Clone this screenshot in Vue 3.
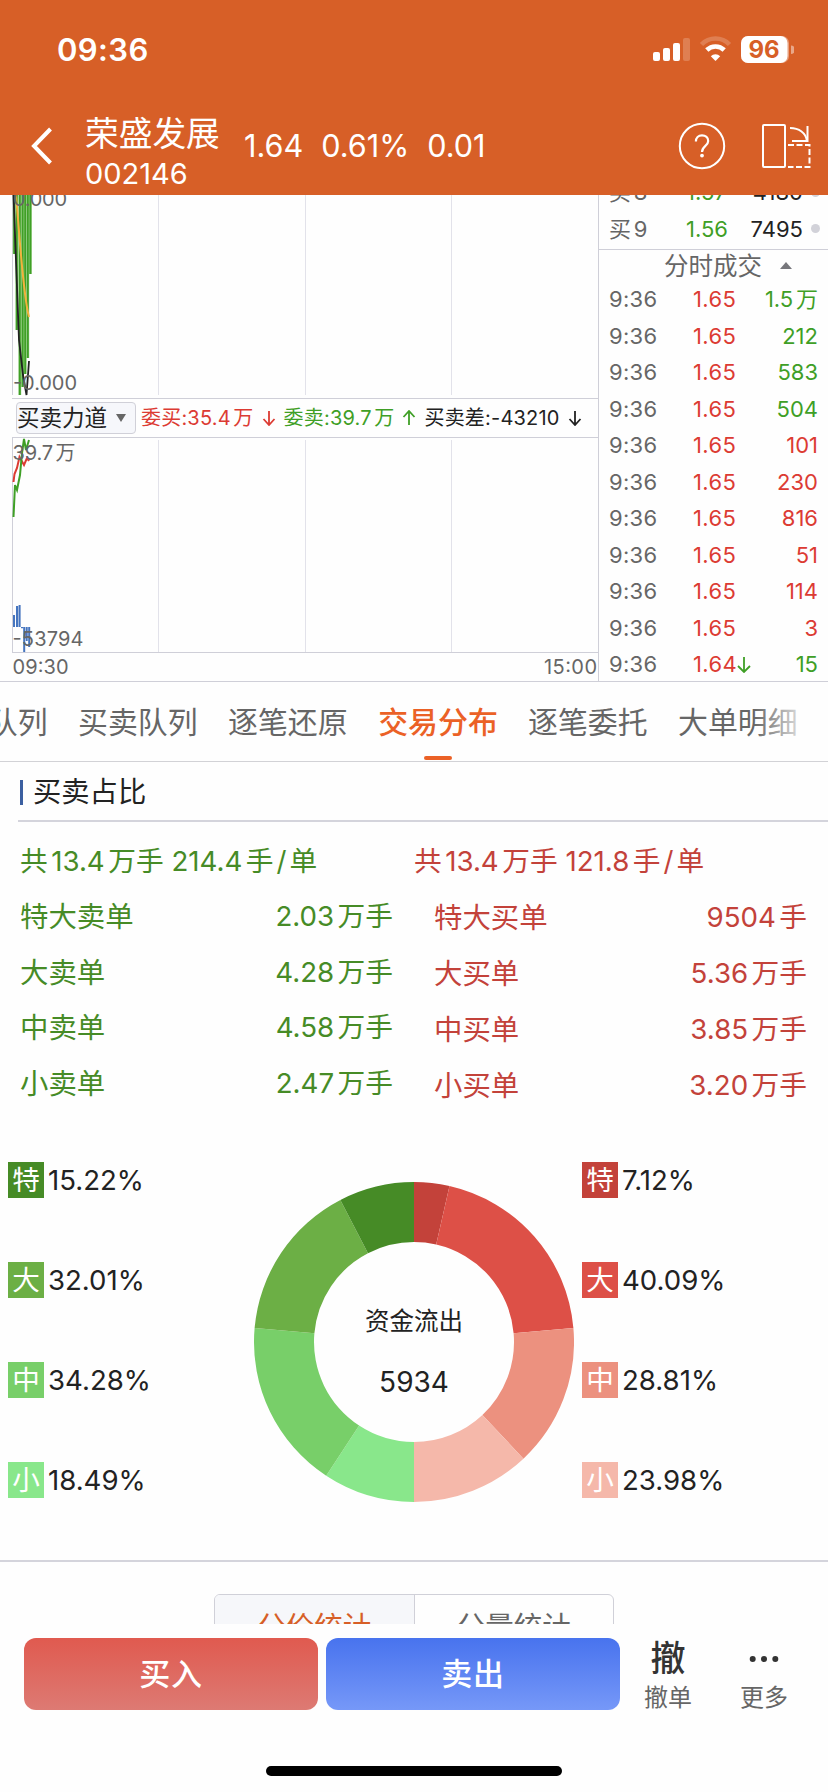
<script setup>
import { computed } from "vue";

const ordens = [
  { hora: "9:36", preco: "1.65", volume: "1.5万", cor: "verde" },
  { hora: "9:36", preco: "1.65", volume: "212", cor: "verde" },
  { hora: "9:36", preco: "1.65", volume: "583", cor: "verde" },
  { hora: "9:36", preco: "1.65", volume: "504", cor: "verde" },
  { hora: "9:36", preco: "1.65", volume: "101", cor: "vermelho" },
  { hora: "9:36", preco: "1.65", volume: "230", cor: "vermelho" },
  { hora: "9:36", preco: "1.65", volume: "816", cor: "vermelho" },
  { hora: "9:36", preco: "1.65", volume: "51", cor: "vermelho" },
  { hora: "9:36", preco: "1.65", volume: "114", cor: "vermelho" },
  { hora: "9:36", preco: "1.65", volume: "3", cor: "vermelho" },
  { hora: "9:36", preco: "1.64", volume: "15", cor: "verde", queda: true },
];

const abas = ["千档队列", "买卖队列", "逐笔还原", "交易分布", "逐笔委托", "大单明细"];

const vendas = [
  { nome: "特大卖单", valor: "2.03万手" },
  { nome: "大卖单", valor: "4.28万手" },
  { nome: "中卖单", valor: "4.58万手" },
  { nome: "小卖单", valor: "2.47万手" },
];

const compras = [
  { nome: "特大买单", valor: "9504手" },
  { nome: "大买单", valor: "5.36万手" },
  { nome: "中买单", valor: "3.85万手" },
  { nome: "小买单", valor: "3.20万手" },
];

const legendaVenda = [
  { sigla: "特", pct: 15.22, cor: "#468b26" },
  { sigla: "大", pct: 32.01, cor: "#6caf45" },
  { sigla: "中", pct: 34.28, cor: "#78cf69" },
  { sigla: "小", pct: 18.49, cor: "#89e78b" },
];

const legendaCompra = [
  { sigla: "特", pct: 7.12, cor: "#c3423a" },
  { sigla: "大", pct: 40.09, cor: "#dd5047" },
  { sigla: "中", pct: 28.81, cor: "#ec917f" },
  { sigla: "小", pct: 23.98, cor: "#f5b8aa" },
];

const ponto = (raio, angulo) => {
  const x = 160 + raio * Math.sin(angulo);
  const y = 160 - raio * Math.cos(angulo);
  return `${x.toFixed(2)} ${y.toFixed(2)}`;
};

// Cada lado ocupa metade da rosca: compras à direita, vendas à esquerda
const fatias = computed(() => {
  let inicio = 0;
  return [...legendaCompra, ...[...legendaVenda].reverse()].map((item) => {
    const fim = inicio + (item.pct / 100) * Math.PI;
    const d = `M${ponto(160, inicio)} A160 160 0 0 1 ${ponto(160, fim)} L${ponto(100, fim)} A100 100 0 0 0 ${ponto(100, inicio)} Z`;
    inicio = fim;
    return { d, cor: item.cor };
  });
});

// Barras do gráfico superior: [x, fim]
const barrasVerdes = [
  [14.2, 254], [16.8, 330], [19.8, 395], [22.6, 387],
  [25.2, 374], [27.8, 358], [30.4, 274],
];
</script>

<template>
  <div class="tela">
    <header class="topo">
      <div class="status">
        <span class="relogio">09:36</span>
        <svg class="icones-status" width="142" height="28" viewBox="652 36 142 28">
          <g fill="#fff">
            <rect x="653" y="52" width="7" height="9" rx="2" />
            <rect x="663" y="48" width="7" height="13" rx="2" />
            <rect x="673" y="43" width="7" height="18" rx="2" />
            <rect x="683" y="38" width="7" height="23" rx="2" opacity=".2" />
          </g>
          <path d="M701.5 44.5 A19.5 19.5 0 0 1 729.5 44.5" fill="none" stroke="#fff" stroke-width="4.6" opacity=".2" />
          <path d="M706.8 50 A12.4 12.4 0 0 1 724.2 50" fill="none" stroke="#fff" stroke-width="4.6" />
          <path d="M715.5 61 L710.8 56.2 A6.7 6.7 0 0 1 720.2 56.2 Z" fill="#fff" />
          <rect x="741" y="36" width="48" height="27" rx="7" fill="#fff" opacity=".4" />
          <rect x="741" y="36" width="46.5" height="27" rx="7" fill="#fff" />
          <path d="M791 45.5 a4 4 0 0 1 0 8.5 Z" fill="#fff" opacity=".45" />
          <text class="bateria" x="764" y="58" text-anchor="middle" textLength="31">96</text>
        </svg>
      </div>
      <div class="titulo">
        <svg class="voltar" width="24" height="40" viewBox="0 0 24 40">
          <path d="M20.5 3 L4 20 L20.5 37" fill="none" stroke="#fff" stroke-width="4" />
        </svg>
        <div class="acao">
          <div class="nome">荣盛发展</div>
          <div class="codigo">002146</div>
        </div>
        <div class="cotacao">
          <span>1.64</span>
          <span>0.61%</span>
          <span>0.01</span>
        </div>
        <svg class="ajuda" width="48" height="48" viewBox="678 122 48 48">
          <circle cx="702" cy="146" r="22.2" fill="none" stroke="#fff" stroke-width="2" />
          <path d="M695.9 141.5 C695.9 137.7 698.4 135.3 702 135.3 C705.6 135.3 708.2 137.6 708.2 141 C708.2 146 702.2 145.8 702 152" fill="none" stroke="#fff" stroke-width="2.2" />
          <circle cx="702" cy="155.6" r="1.9" fill="#fff" />
        </svg>
        <svg class="girar" width="50" height="46" viewBox="761 123 50 46">
          <g fill="none" stroke="#fff" stroke-width="2">
            <rect x="763" y="125" width="22" height="42" rx="1" />
            <path d="M790 128 C799 128 806 133 807 141" />
            <path d="M807.5 126 V141 H792" />
            <path d="M788 145 H809.5 V167 H788" stroke-dasharray="6 2.5" />
          </g>
        </svg>
      </div>
    </header>

    <section class="mercado">
      <div class="graficos">
        <svg class="grafico" width="598" height="203" viewBox="0 195 598 203">
          <path d="M12.5 195 V395" stroke="#cfcfd8" />
          <path d="M158.5 195 V395 M305.5 195 V395 M451.5 195 V395" stroke="#e2e2ea" />
          <rect v-for="b in barrasVerdes" :key="b[0]" :x="b[0] - 1.4" y="195" width="2.8" :height="b[1] - 195" fill="#8fcb7c" />
          <rect v-for="b in barrasVerdes" :key="'n' + b[0]" :x="b[0] - 0.9" y="195" width="1.8" :height="b[1] - 195" fill="#3f9f26" />
          <path d="M16 195 C20 240 23 295 29 317" fill="none" stroke="#f3b23c" stroke-width="2" />
          <path d="M13.5 195 C15 240 17 290 19 340 L23 375 L26.5 395 L29 361" fill="none" stroke="#222" stroke-width="1.8" />
          <text class="eixo" x="13" y="206" textLength="54">0.000</text>
          <text class="eixo" x="13" y="390" textLength="64">-0.000</text>
        </svg>
        <div class="indicador">
          <div class="seletor">
            买卖力道
            <svg width="10" height="8" viewBox="0 0 10 8"><path d="M0 0 H10 L5 8 Z" fill="#666" /></svg>
          </div>
          <span class="item vermelho">委买:35.4万
            <svg width="14" height="16" viewBox="0 0 14 16"><path d="M7 1 V15 M1.5 9 L7 15 L12.5 9" /></svg>
          </span>
          <span class="item verde">委卖:39.7万
            <svg width="14" height="16" viewBox="0 0 14 16"><path d="M7 15 V1 M1.5 7 L7 1 L12.5 7" /></svg>
          </span>
          <span class="item escuro">买卖差:-43210
            <svg width="14" height="16" viewBox="0 0 14 16"><path d="M7 1 V15 M1.5 9 L7 15 L12.5 9" /></svg>
          </span>
        </div>
        <svg class="grafico" width="598" height="243" viewBox="0 438 598 243">
          <path d="M12.5 438 V652" stroke="#cfcfd8" />
          <path d="M158.5 440 V652 M305.5 440 V652 M451.5 440 V652" stroke="#e2e2ea" />
          <path d="M12 652.5 H598" stroke="#cfcfd8" />
          <g fill="#4675bf">
            <rect x="13" y="615" width="2" height="12" />
            <rect x="16" y="606" width="2.2" height="21" />
            <rect x="18.6" y="605" width="2" height="22" />
            <rect x="21" y="627" width="2.2" height="1.2" />
            <rect x="23.2" y="627" width="2" height="25" />
            <rect x="25.7" y="627" width="2" height="14" />
            <rect x="28.2" y="627" width="2" height="20" />
          </g>
          <path d="M13.5 482 L14.5 474 L17 468 L19.5 457 L24 465 L27 458 L29 461" fill="none" stroke="#dc3b33" stroke-width="2" />
          <path d="M13.5 517 L15 485 L17 490 L20 475 L22 453 L24 439 L26 450 L29 440" fill="none" stroke="#3f9f26" stroke-width="2" />
          <text class="eixo" x="12.5" y="460" textLength="63">39.7万</text>
          <text class="eixo" x="12.5" y="646" textLength="71">-53794</text>
          <text class="eixo" x="12.5" y="674" textLength="56">09:30</text>
          <text class="eixo" x="544" y="674" textLength="53">15:00</text>
        </svg>
      </div>

      <div class="livro">
        <div class="fila">
          <div class="oferta">
            <span class="cinza">买8</span>
            <span class="verde">1.57</span>
            <span class="escuro">4180</span>
            <i></i>
          </div>
          <div class="oferta">
            <span class="cinza">买9</span>
            <span class="verde">1.56</span>
            <span class="escuro">7495</span>
            <i></i>
          </div>
        </div>
        <div class="livro-titulo">
          分时成交
          <svg width="12" height="7" viewBox="0 0 12 7"><path d="M0 7 H12 L6 0 Z" fill="#77777c" /></svg>
        </div>
        <div v-for="(o, i) in ordens" :key="i" class="negocio">
          <span class="cinza">{{ o.hora }}</span>
          <span class="vermelho preco">{{ o.preco }}<svg v-if="o.queda" class="verde" width="14" height="17" viewBox="0 0 14 17"><path d="M7 1 V16 M1 10 L7 16 L13 10" /></svg></span>
          <span :class="o.cor">{{ o.volume }}</span>
        </div>
      </div>
    </section>

    <nav class="abas">
      <div v-for="aba in abas" :key="aba" class="aba" :class="{ ativa: aba === '交易分布' }">{{ aba }}</div>
    </nav>

    <main class="conteudo">
      <h3 class="secao">买卖占比</h3>
      <div class="quadro">
        <div class="lado venda">
          <p class="total">共13.4万手 214.4手<i>/</i>单</p>
          <div v-for="v in vendas" :key="v.nome" class="linha">
            <span class="nome-ordem">{{ v.nome }}</span><span>{{ v.valor }}</span>
          </div>
        </div>
        <div class="lado compra">
          <p class="total">共13.4万手 121.8手<i>/</i>单</p>
          <div v-for="c in compras" :key="c.nome" class="linha">
            <span class="nome-ordem">{{ c.nome }}</span><span>{{ c.valor }}</span>
          </div>
        </div>
      </div>

      <div class="distribuicao">
        <div class="legenda">
          <div v-for="l in legendaVenda" :key="l.sigla" class="legenda-item">
            <b :style="{ background: l.cor }">{{ l.sigla }}</b>{{ l.pct.toFixed(2) }}%
          </div>
        </div>
        <svg class="rosca" width="320" height="320" viewBox="0 0 320 320">
          <path v-for="f in fatias" :key="f.cor" :d="f.d" :fill="f.cor" />
          <text x="160" y="148" text-anchor="middle" class="rosca-titulo">资金流出</text>
          <text x="160" y="210" text-anchor="middle" class="rosca-valor">5934</text>
        </svg>
        <div class="legenda">
          <div v-for="l in legendaCompra" :key="l.sigla" class="legenda-item">
            <b :style="{ background: l.cor }">{{ l.sigla }}</b>{{ l.pct.toFixed(2) }}%
          </div>
        </div>
      </div>

      <div class="estatisticas">
        <div class="segmentos">
          <div class="segmento marcado">分价统计</div>
          <div class="segmento">分量统计</div>
        </div>
      </div>
    </main>

    <footer class="rodape">
      <div class="acoes">
        <button class="botao comprar">买入</button>
        <button class="botao vender">卖出</button>
        <div class="atalho">
          <strong>撤</strong>
          <span>撤单</span>
        </div>
        <div class="atalho">
          <svg width="34" height="38" viewBox="0 0 34 38">
            <g fill="#333">
              <circle cx="5.7" cy="21" r="3" />
              <circle cx="17" cy="21" r="3" />
              <circle cx="28.3" cy="21" r="3" />
            </g>
          </svg>
          <span>更多</span>
        </div>
      </div>
      <div class="indicador-home"></div>
    </footer>
  </div>
</template>

<style>
body {
  background: #fff;
}
</style>

<style scoped>
.tela {
  width: 828px;
  height: 1792px;
  overflow: hidden;
  display: flex;
  flex-direction: column;
  background: #fefefe;
  font-family: Inter, "Noto Sans CJK SC", sans-serif;
  color: #222;
  white-space: nowrap;
  text-autospace: normal;
}

.tela * {
  box-sizing: border-box;
}

svg {
  display: block;
  flex: none;
}

.verde {
  color: #3f9f26;
}

.vermelho {
  color: #dc3b33;
}

.cinza {
  color: #666;
}

.escuro {
  color: #222;
}

.topo {
  height: 195px;
  flex: none;
  background: #d75f27;
  color: #fff;
}

.status {
  height: 99px;
  display: flex;
  justify-content: space-between;
  align-items: center;
  padding: 0 34px 0 57px;
}

.relogio {
  font-size: 31px;
  font-weight: 600;
  letter-spacing: 0.4px;
}

.bateria {
  font-size: 24px;
  font-weight: 700;
  fill: #d75f27;
}

.titulo {
  height: 94px;
  display: flex;
  align-items: center;
  padding: 0 17px 0 30px;
}

.acao {
  width: 159px;
  padding: 14px 0 0 31px;
}

.nome {
  font-size: 33.7px;
  line-height: 41px;
}

.codigo {
  font-size: 29px;
  line-height: 39px;
}

.voltar {
  width: 24px;
}

.cotacao {
  display: flex;
  flex: 1;
  gap: 18px;
  padding-left: 31px;
  font-size: 30.6px;
  line-height: 40px;
}

.girar {
  margin-left: 35px;
}

.mercado {
  height: 487px;
  flex: none;
  display: flex;
  border-bottom: 1px solid #cfcfd8;
}

.graficos {
  width: 599px;
  border-right: 1px solid #cfcfd8;
}

.eixo {
  font-size: 20px;
  fill: #666;
}

.indicador {
  height: 40px;
  margin-left: 12px;
  padding-left: 4px;
  display: flex;
  align-items: center;
  border-top: 1px solid #cfcfd8;
  border-bottom: 1px solid #cfcfd8;
  font-size: 20px;
  line-height: 38px;
}

.seletor {
  display: flex;
  align-items: center;
  gap: 9px;
  width: 120px;
  height: 32px;
  margin-right: 5px;
  background: #f6f7fb;
  border: 1px solid #d0d0d8;
  border-radius: 4px;
  font-size: 22.5px;
  line-height: 30px;
}

.item {
  display: flex;
  align-items: center;
  gap: 8px;
  margin-right: 8px;
  letter-spacing: 0.2px;
}

.item path,
.preco path {
  fill: none;
  stroke: currentColor;
  stroke-width: 1.8;
}

.livro {
  flex: 1;
  font-size: 22px;
}

.fila {
  height: 55px;
  display: flex;
  flex-direction: column;
  justify-content: flex-end;
  overflow: hidden;
  border-bottom: 1px solid #cfcfd8;
}

.oferta {
  height: 36.5px;
  flex: none;
  display: grid;
  grid-template-columns: 77px 46px 71px 18px;
  align-items: center;
  padding: 0 8px 4px 10px;
  line-height: 32px;
}

.oferta .escuro {
  text-align: right;
}

.oferta i {
  width: 9px;
  height: 9px;
  margin-left: 8px;
  border-radius: 50%;
  background: #d2d2d9;
}

.livro-titulo {
  height: 31px;
  display: flex;
  align-items: center;
  gap: 18px;
  padding-left: 65px;
  font-size: 24.5px;
  line-height: 30px;
  color: #666;
}

.negocio {
  height: 36.5px;
  display: grid;
  grid-template-columns: 84px 60px 1fr;
  align-items: center;
  padding: 0 11px 0 10px;
  line-height: 36px;
}

.negocio span:last-child {
  text-align: right;
}

.negocio .cinza {
  letter-spacing: 0.3px;
}

.preco {
  display: flex;
  align-items: center;
  letter-spacing: 0.4px;
}

.abas {
  height: 80px;
  flex: none;
  display: flex;
  gap: 30px;
  margin-left: -72px;
  border-bottom: 1px solid #d2d2d6;
  font-size: 29.9px;
  line-height: 81px;
  color: #666;
  position: relative;
}

.abas::after {
  content: "";
  position: absolute;
  top: 0;
  right: 0;
  width: 74px;
  height: 78px;
  background: linear-gradient(90deg, rgba(254, 254, 254, 0), #fefefe 80%);
}

.aba {
  width: 120px;
  flex: none;
}

.ativa {
  display: flex;
  flex-direction: column;
  align-items: center;
  color: #eb6126;
  font-weight: 500;
}

.ativa::after {
  content: "";
  width: 28px;
  height: 4px;
  margin-top: -7px;
  border-radius: 2px;
  background: #eb6126;
}

.conteudo {
  height: 862px;
  flex: none;
  overflow: hidden;
}

.secao {
  height: 60px;
  margin: 0 0 0 18px;
  padding: 2px 0 0 2px;
  display: flex;
  align-items: center;
  gap: 10px;
  border-bottom: 2px solid #d4d4dc;
  font-size: 28.3px;
  font-weight: 400;
  line-height: 56px;
}

.secao::before {
  content: "";
  width: 3px;
  height: 25px;
  background: #3b5fa0;
}

.quadro {
  display: grid;
  grid-template-columns: 373px 393px;
  gap: 21px;
  padding: 12px 0 0 20px;
  font-size: 27.7px;
}

.total {
  margin: 0;
  height: 55px;
  line-height: 55px;
}

.total i {
  padding: 0 3px;
  font-style: normal;
}

.nome-ordem {
  font-size: 28.4px;
}

.linha {
  height: 55.7px;
  display: flex;
  justify-content: space-between;
  line-height: 55px;
}

.venda {
  color: #468b26;
}

.compra {
  color: #c3423a;
}

.compra .linha {
  height: 56px;
  padding-left: 20px;
  line-height: 57px;
}

.distribuicao {
  display: grid;
  grid-template-columns: 246px 320px 1fr;
  align-items: start;
  height: 449px;
  padding: 49px 0 0 8px;
  border-bottom: 2px solid #d4d4dc;
}

.legenda {
  display: flex;
  flex-direction: column;
  gap: 64px;
  font-size: 27.6px;
}

.legenda-item {
  display: flex;
  align-items: center;
  gap: 4px;
  height: 36px;
}

.legenda-item b {
  width: 36px;
  height: 36px;
  font-weight: 400;
  line-height: 36px;
  text-align: center;
  color: #fff;
}

.rosca {
  margin-top: 20px;
}

.legenda:last-child {
  margin-left: 8px;
}

.rosca-titulo {
  font-size: 24.5px;
  fill: #222;
}

.rosca-valor {
  font-size: 28px;
  fill: #222;
}

.estatisticas {
  display: flex;
  justify-content: center;
  padding-top: 32px;
}

.segmentos {
  display: flex;
  width: 400px;
  height: 64px;
  border: 1px solid #d0d0d8;
  border-radius: 6px;
  overflow: hidden;
  font-size: 28.5px;
  line-height: 64px;
  text-align: center;
  color: #666;
}

.segmento {
  flex: 1;
}

.marcado {
  background: #f6f7fa;
  border-right: 1px solid #d0d0d8;
  color: #d75f27;
}

.rodape {
  flex: 1;
  display: flex;
  flex-direction: column;
  align-items: center;
  justify-content: space-between;
  padding: 14px 0 16px;
}

.acoes {
  display: flex;
  width: 828px;
  padding-left: 24px;
}

.botao {
  width: 294px;
  height: 72px;
  border: none;
  border-radius: 12px;
  font: 500 31px/62px Inter, "Noto Sans CJK SC", sans-serif;
  letter-spacing: 0.8px;
  color: #fff;
}

.comprar {
  margin-right: 8px;
  background: linear-gradient(#e05a4f, #dd7a73);
}

.vender {
  background: linear-gradient(#4873ee, #7698f8);
}

.atalho {
  width: 96px;
  display: flex;
  flex-direction: column;
  align-items: center;
  font-size: 24px;
  line-height: 40px;
  color: #666;
}

.atalho strong {
  height: 40px;
  font-size: 35px;
  font-weight: 500;
  color: #333;
}

.atalho svg {
  margin-bottom: 2px;
}

.indicador-home {
  width: 296px;
  height: 10px;
  border-radius: 5px;
  background: #000;
}
</style>
